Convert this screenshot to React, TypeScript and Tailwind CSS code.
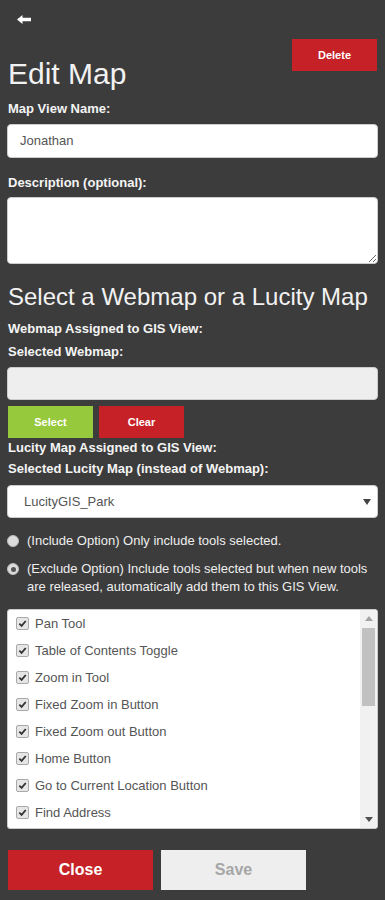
const tools = [
  "Pan Tool",
  "Table of Contents Toggle",
  "Zoom in Tool",
  "Fixed Zoom in Button",
  "Fixed Zoom out Button",
  "Home Button",
  "Go to Current Location Button",
  "Find Address",
];

const CheckBox = () => (
  <span className="flex h-[13px] w-[13px] shrink-0 items-center justify-center rounded-[2px] border border-[#a9a9a9] bg-[#e6e6e6]">
    <svg viewBox="0 0 10 10" className="h-[9px] w-[9px]">
      <path d="M1.5 5.2 L4 7.6 L8.6 2.2" fill="none" stroke="#333" strokeWidth="2" />
    </svg>
  </span>
);

const Radio = ({ checked }: { checked?: boolean }) => (
  <span className="mt-[3px] flex h-[12px] w-[12px] shrink-0 items-center justify-center rounded-full border border-[#bdbdbd] bg-[#dcdcdc]">
    {checked && <span className="h-[5px] w-[5px] rounded-full bg-[#555]" />}
  </span>
);

export default function App() {
  return (
    <div className="min-h-[900px] bg-[#3c3c3c] px-[7px] pb-[11px] font-[family-name:'Liberation_Sans',Arial,sans-serif]">
      <div className="h-[39px] pl-[10px] pt-[15px]">
        <svg viewBox="0 0 14 9" className="h-[9px] w-[14px]">
          <polygon points="0,4.5 5.5,0 5.5,2.8 14,2.8 14,6.2 5.5,6.2 5.5,9" fill="#fff" />
        </svg>
      </div>
      <div className="flex items-start justify-between">
        <h1 className="ml-px mt-[20px] text-[30px] leading-[30px] text-[#f2f2f2]">Edit Map</h1>
        <button className="mr-px h-[32px] w-[85px] bg-[#c62127] text-[11px] font-bold text-white">
          Delete
        </button>
      </div>

      <label className="ml-px mt-[10px] block text-[13px] font-bold leading-[20px] text-[#f4f4f4]">
        Map View Name:
      </label>
      <div className="mt-[5px] flex h-[34px] items-center rounded-[4px] border border-[#ccc] bg-white px-[12px] text-[13px] text-[#555]">
        Jonathan
      </div>

      <label className="ml-px mt-[15px] block text-[13px] font-bold leading-[20px] text-[#f4f4f4]">
        Description (optional):
      </label>
      <textarea
        readOnly
        className="mt-[4px] block h-[67px] w-full rounded-[4px] border border-[#ccc] bg-white"
      />

      <h2 className="ml-px mt-[18px] whitespace-nowrap text-[24px] leading-[30px] text-[#f2f2f2]">
        Select a Webmap or a Lucity Map
      </h2>
      <div className="ml-px mt-[7px] text-[13px] font-bold leading-[20px] text-[#f4f4f4]">
        Webmap Assigned to GIS View:
      </div>
      <div className="ml-px mt-[3px] text-[13px] font-bold leading-[20px] text-[#f4f4f4]">
        Selected Webmap:
      </div>
      <div className="mt-[5px] h-[33px] rounded-[4px] border border-[#ccc] bg-[#eeeeee]" />
      <div className="mt-[6px] flex gap-[6px] pl-px">
        <button className="h-[32px] w-[85px] bg-[#97c93c] text-[11px] font-bold text-white">Select</button>
        <button className="h-[32px] w-[85px] bg-[#c62127] text-[11px] font-bold text-white">Clear</button>
      </div>
      <div className="ml-px text-[13px] font-bold leading-[20px] text-[#f4f4f4]">
        Lucity Map Assigned to GIS View:
      </div>
      <div className="ml-px mt-px text-[13px] font-bold leading-[20px] text-[#f4f4f4]">
        Selected Lucity Map (instead of Webmap):
      </div>
      <div className="mt-[6px] flex h-[33px] items-center justify-between rounded-[4px] border border-[#ccc] bg-white pl-[16px] pr-[6px] text-[13px] text-[#555]">
        <span>LucityGIS_Park</span>
        <svg viewBox="0 0 8 6" className="h-[6px] w-[8px]">
          <polygon points="0,0 8,0 4,6" fill="#444" />
        </svg>
      </div>

      <div className="mt-[14px] flex gap-[8px] text-[13px] leading-[18px] text-[#eeeeee]">
        <Radio />
        <span>(Include Option) Only include tools selected.</span>
      </div>
      <div className="mt-[10px] flex gap-[8px] text-[13px] leading-[18px] text-[#eeeeee]">
        <Radio checked />
        <span>
          (Exclude Option) Include tools selected but when new tools are released, automatically add them to this GIS View.
        </span>
      </div>

      <div className="mt-[13px] flex h-[220px] overflow-hidden rounded-[3px] border border-[#ccc] bg-white">
        <div className="flex-1 overflow-hidden">
          {tools.map((t) => (
            <div key={t} className="flex h-[27px] items-center gap-[6px] pl-[8px] text-[13px] text-[#555]">
              <CheckBox />
              <span>{t}</span>
            </div>
          ))}
        </div>
        <div className="flex w-[17px] flex-col items-center bg-[#f1f1f1]">
          <div className="flex h-[17px] items-center justify-center">
            <svg viewBox="0 0 8 5" className="h-[5px] w-[8px]">
              <polygon points="0,5 8,5 4,0" fill="#a3a3a3" />
            </svg>
          </div>
          <div className="mt-px h-[78px] w-[13px] bg-[#c1c1c1]" />
          <div className="flex-1" />
          <div className="flex h-[17px] items-center justify-center">
            <svg viewBox="0 0 8 5" className="h-[5px] w-[8px]">
              <polygon points="0,0 8,0 4,5" fill="#505050" />
            </svg>
          </div>
        </div>
      </div>

      <div className="mt-[21px] flex gap-[8px] pl-px">
        <button className="h-[40px] w-[145px] bg-[#c62127] text-[16px] font-bold text-white">Close</button>
        <button className="h-[40px] w-[145px] bg-[#eeeeee] text-[16px] font-bold text-[#a6a6a6]">Save</button>
      </div>
    </div>
  );
}
